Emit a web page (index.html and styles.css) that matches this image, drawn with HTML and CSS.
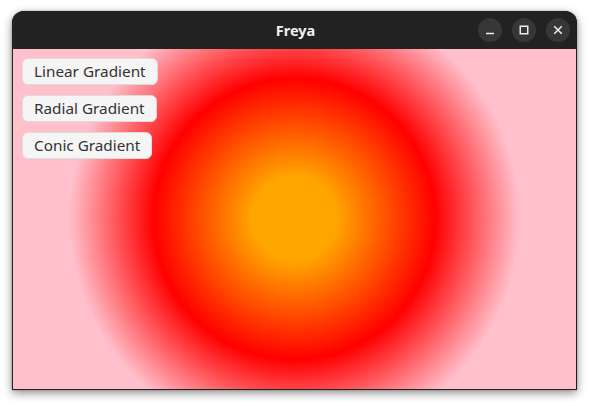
FILE: index.html
```html
<!DOCTYPE html>
<html>
<head>
<meta charset="utf-8">
<link rel="stylesheet" href="styles.css">
</head>
<body>
<div class="window">
  <div class="titlebar">
    <div class="title">Freya</div>
    <div class="controls">
      <div class="ctl"><svg width="24" height="24" viewBox="0 0 24 24"><path d="M8 15.5h8" stroke="#eeeeee" stroke-width="1.5"/></svg></div>
      <div class="ctl"><svg width="24" height="24" viewBox="0 0 24 24"><rect x="8.25" y="8.25" width="7.5" height="7.5" fill="none" stroke="#eeeeee" stroke-width="1.5"/></svg></div>
      <div class="ctl"><svg width="24" height="24" viewBox="0 0 24 24"><path d="M8.25 8.25l7.5 7.5M15.75 8.25l-7.5 7.5" stroke="#eeeeee" stroke-width="1.5"/></svg></div>
    </div>
  </div>
  <div class="content">
    <button class="btn">Linear Gradient</button>
    <button class="btn">Radial Gradient</button>
    <button class="btn">Conic Gradient</button>
  </div>
</div>
</body>
</html>
```

FILE: styles.css
```css
html, body {
  margin: 0;
  padding: 0;
  background: #ffffff;
  width: 590px;
  height: 406px;
  overflow: hidden;
}
.window {
  margin: 11px 0 0 12px;
  width: 565px;
  box-sizing: border-box;
  border-radius: 12px 12px 0 0;
  background: #222222;
  box-shadow: 0 3px 10px rgba(0,0,0,0.45), 0 0 2px rgba(0,0,0,0.3);
  display: flex;
  flex-direction: column;
}
.titlebar {
  height: 38px;
  position: relative;
  display: flex;
  align-items: center;
  justify-content: center;
  border-radius: 12px 12px 0 0;
  background: #222222;
}
.title {
  font-family: "Noto Sans", "Open Sans", sans-serif;
  font-weight: bold;
  font-size: 14.5px;
  color: #f0f0f0;
  margin-left: 2px;
}
.controls {
  position: absolute;
  right: 7px;
  top: 7px;
  display: flex;
  gap: 10px;
}
.ctl {
  width: 24px;
  height: 24px;
  border-radius: 50%;
  background: #373737;
  display: flex;
}
.content {
  margin: 0 1px 1px 1px;
  height: 340px;
  box-sizing: border-box;
  padding: 8.5px 0 0 9px;
  display: flex;
  flex-direction: column;
  align-items: flex-start;
  gap: 10px;
  background: radial-gradient(circle farthest-side at 50% 50%, #ffa500 15%, #ff0000 50%, #ffc0cb 80%);
}
.btn {
  font-family: "Noto Sans", "Open Sans", sans-serif;
  font-size: 15.3px;
  color: #333333;
  background: #f5f5f5;
  border: 1px solid #dcdcdc;
  border-radius: 6px;
  height: 27px;
  padding: 0 11px;
  margin: 0;
  line-height: 25px;
}
```
